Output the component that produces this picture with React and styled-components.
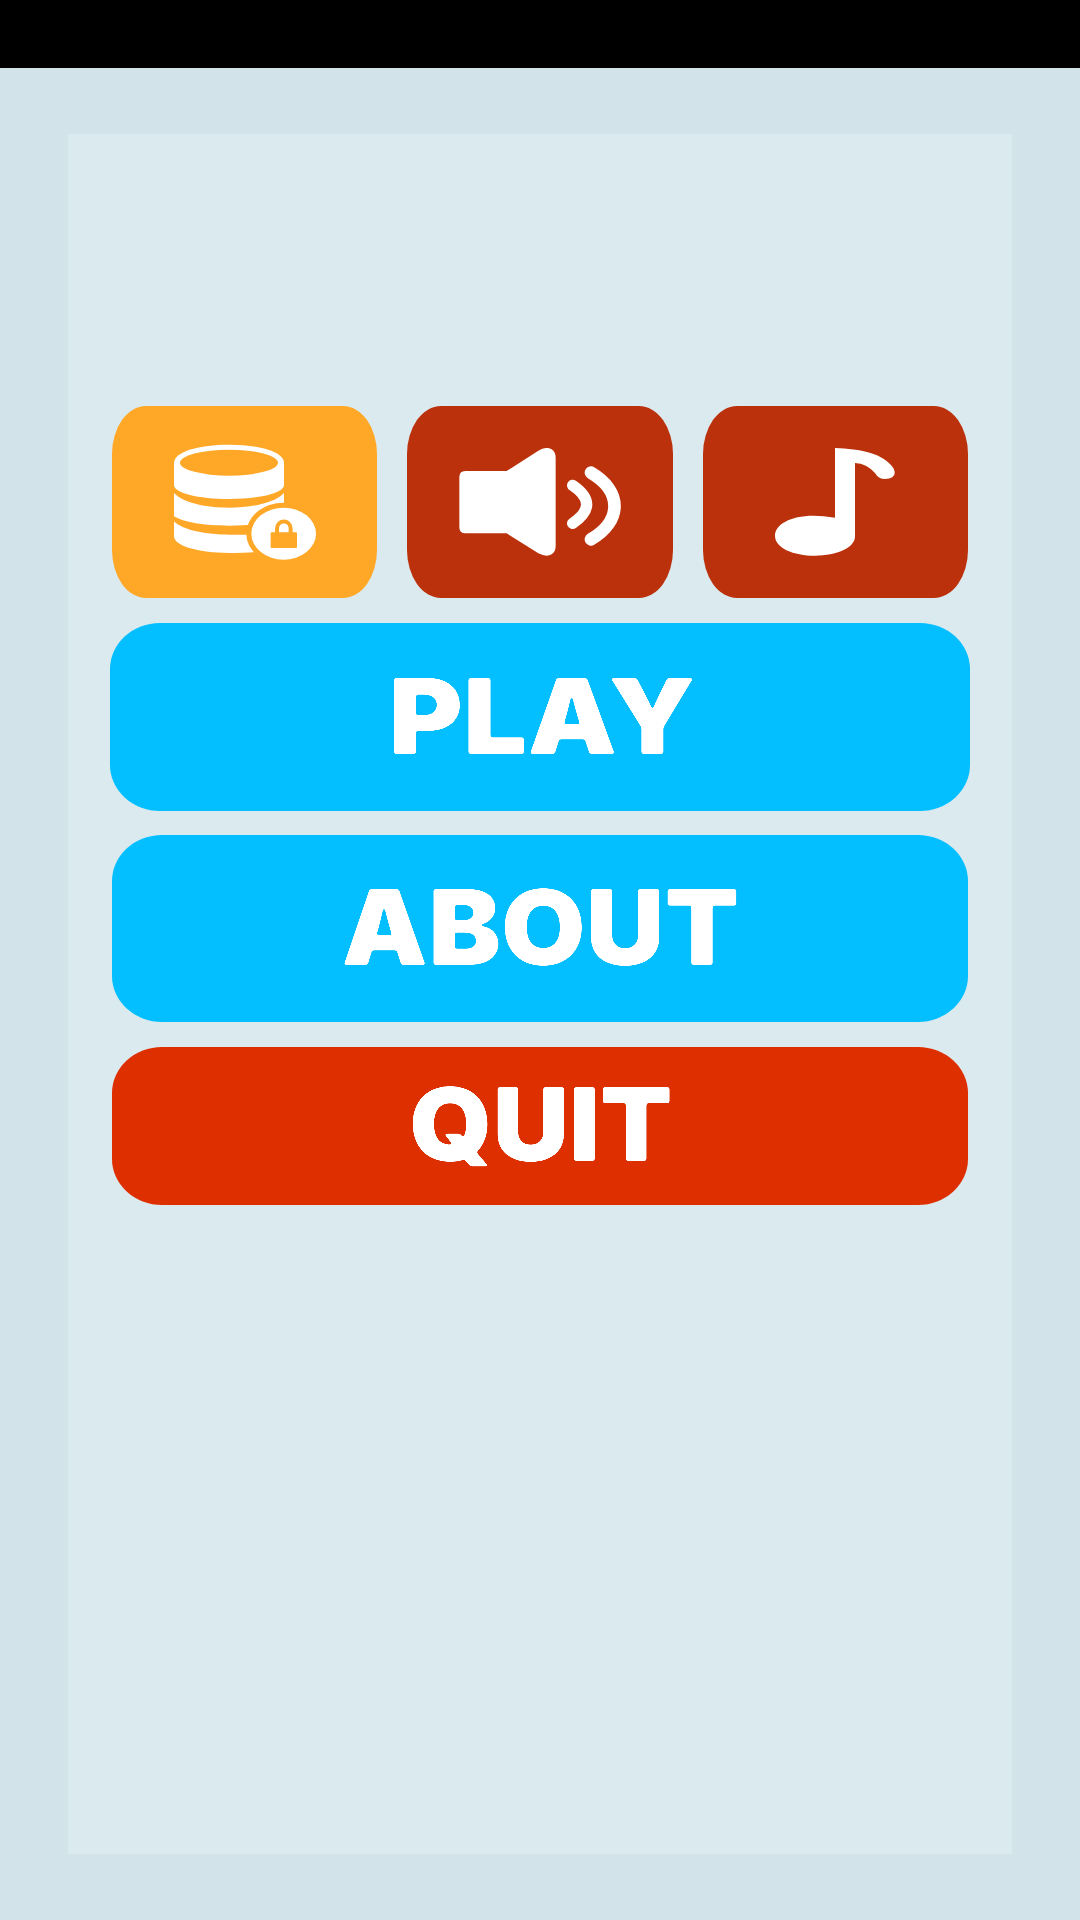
import React from "react";
import styled, { createGlobalStyle } from "styled-components";

const Global = createGlobalStyle`
  html, body { margin: 0; padding: 0; background: #d2e4ea; }
`;

const Page = styled.div`
  width: 1080px;
  height: 1920px;
  background: #d2e4ea;
  overflow: hidden;
`;

const TopBar = styled.div`
  height: 68px;
  background: #000;
`;

const FilterDefs = styled.svg`
  display: block;
  width: 0;
  height: 0;
`;

const Panel = styled.main`
  box-sizing: border-box;
  margin: 66px 68px 0;
  height: 1720px;
  padding: 272px 44px 0;
  background: #dbeaef;
  display: flex;
  flex-direction: column;
  gap: 24px;
`;

const IconRow = styled.div`
  display: grid;
  grid-template-columns: repeat(3, 1fr);
  gap: 30px;
  margin-bottom: 1px;
`;

const IconButton = styled.button`
  height: 192px;
  padding: 0;
  border: 0;
  border-radius: 34px / 48px;
  background: ${(p) => p.$color};
  display: flex;
  align-items: center;
  justify-content: center;
`;

const MenuButton = styled.button`
  height: ${(p) => p.$height}px;
  margin: ${(p) => p.$top || 0}px ${(p) => (p.$wide ? -2 : 0)}px 0;
  padding: 0 0 4px ${(p) => p.$nudge}px;
  border: 0;
  border-radius: 50px / 46px;
  background: ${(p) => p.$color};
  display: flex;
  align-items: center;
  justify-content: center;
`;

const Label = styled.span`
  display: block;
  color: #fff;
  font-family: Inter, "Liberation Sans", sans-serif;
  font-weight: 900;
  font-size: ${(p) => p.$size}px;
  line-height: 1;
  filter: url(#soft-corners);
  transform: scaleX(${(p) => p.$stretch});
`;

const orange = "#ffa828";

const DatabaseIcon = () => (
  <svg width="144" height="118" viewBox="250 190 432 354" aria-hidden="true">
    <path fill="#fff" d="M253 250 C253 215 330 195 418 195 C506 195 583 215 583 250 V316 C583 340 510 358 418 358 C326 358 253 340 253 316 Z" />
    <ellipse cx="418" cy="249" rx="147" ry="39" fill={orange} />
    <path fill="#fff" d="M253 340 C280 370 350 384 418 384 C486 384 556 370 583 340 V405 C556 428 490 438 418 438 C346 438 280 428 253 410 Z" />
    <path fill="#fff" d="M253 425 C280 452 350 465 418 465 H520 V515 C490 518 450 520 418 520 C330 520 253 500 253 470 Z" />
    <ellipse cx="582" cy="462" rx="112" ry="93" fill={orange} />
    <ellipse cx="582" cy="462" rx="97" ry="78" fill="#fff" />
    <rect x="543" y="458" width="79" height="47" rx="3" fill={orange} />
    <path d="M562 460 V448 C562 418 603 418 603 448 V460" fill="none" stroke={orange} strokeWidth="12" />
  </svg>
);

const SpeakerIcon = () => (
  <svg width="162" height="108" viewBox="207 206 486 324" aria-hidden="true">
    <path fill="#fff" d="M226 275 H350 L445 214 Q470 200 485 210 Q497 218 497 235 V500 Q497 517 485 525 Q470 535 445 522 L350 462 H226 Q208 462 208 444 V293 Q208 275 226 275 Z" />
    <path d="M548 318 Q632 375 548 432" fill="none" stroke="#fff" strokeWidth="34" strokeLinecap="round" />
    <path d="M603 280 C697 335 697 425 603 480" fill="none" stroke="#fff" strokeWidth="38" strokeLinecap="round" />
  </svg>
);

const NoteIcon = () => (
  <svg width="121" height="108" viewBox="285 205 363 324" aria-hidden="true">
    <path fill="#fff" d="M465 205 C540 208 610 220 640 265 Q655 296 615 298 Q595 298 585 280 Q560 252 525 250 V470 C525 505 470 528 405 528 C340 528 285 505 285 468 C285 435 330 408 400 408 Q430 408 465 414 Z" />
  </svg>
);

export default function App() {
  return (
    <Page>
      <Global />
      <FilterDefs aria-hidden="true">
        <filter id="soft-corners" x="-5%" y="-5%" width="110%" height="110%">
          <feGaussianBlur stdDeviation="1.2" />
          <feColorMatrix values="1 0 0 0 0  0 1 0 0 0  0 0 1 0 0  0 0 0 8 -4" />
        </filter>
      </FilterDefs>
      <TopBar />
      <Panel>
        <IconRow>
          <IconButton $color={orange}><DatabaseIcon /></IconButton>
          <IconButton $color="#bb310c"><SpeakerIcon /></IconButton>
          <IconButton $color="#bb310c"><NoteIcon /></IconButton>
        </IconRow>
        <MenuButton $color="#04bfff" $height={188} $wide $nudge={4}><Label $size={105} $stretch={1.08}>PLAY</Label></MenuButton>
        <MenuButton $color="#04bfff" $height={187} $nudge={0}><Label $size={105} $stretch={1.04}>ABOUT</Label></MenuButton>
        <MenuButton $color="#de2f00" $height={158} $top={1} $nudge={2}><Label $size={102} $stretch={1.04}>QUIT</Label></MenuButton>
      </Panel>
    </Page>
  );
}
